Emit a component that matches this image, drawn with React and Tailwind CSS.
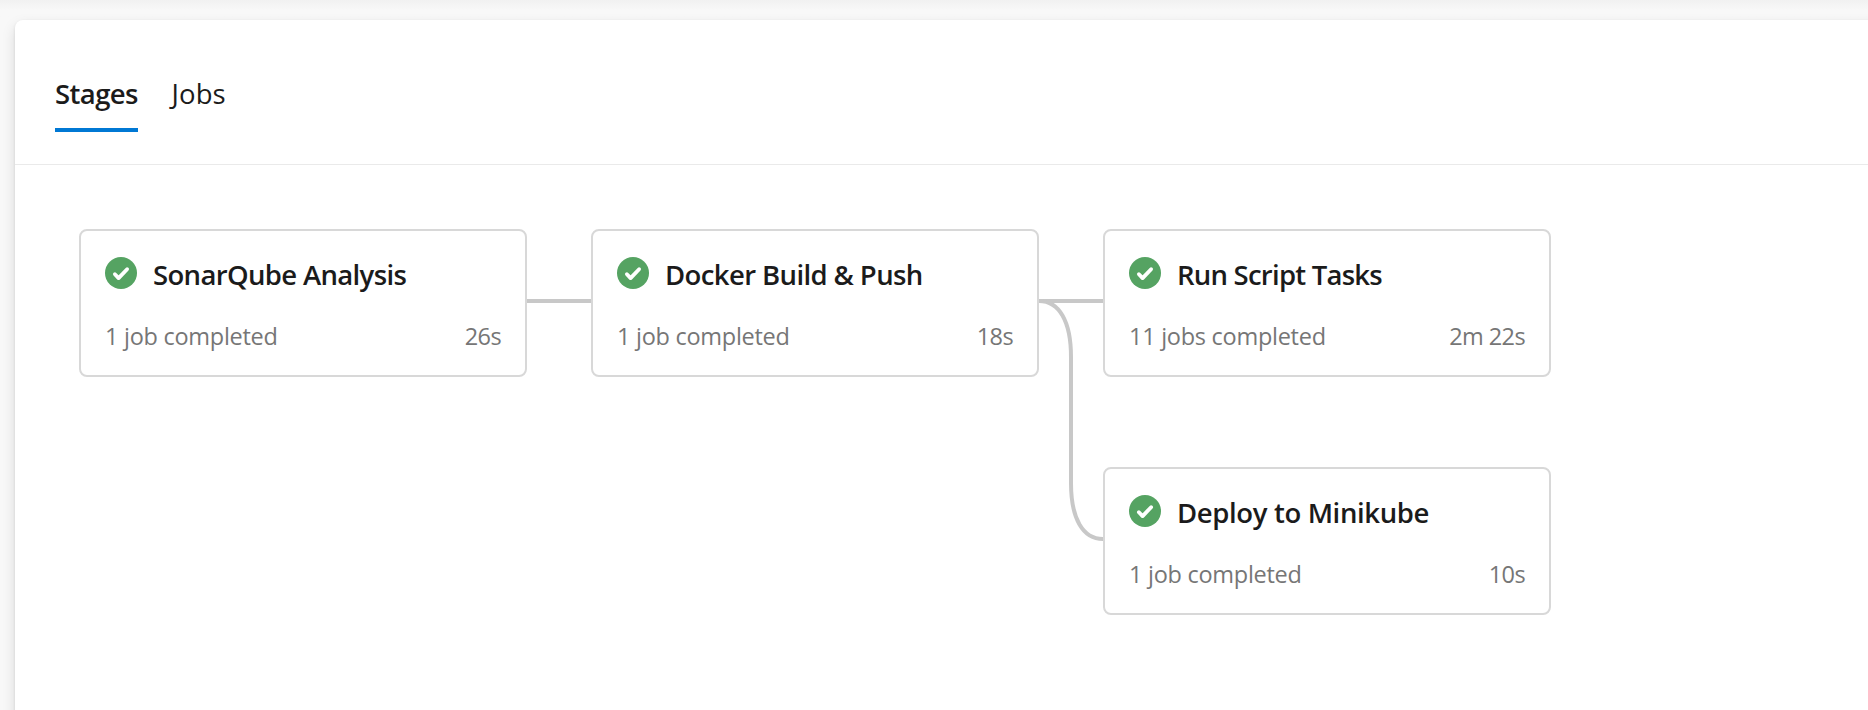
const stages = {
  sonar: { title: 'SonarQube Analysis', jobs: '1 job completed', time: '26s', tracking: 'tracking-[-0.65px]' },
  docker: { title: 'Docker Build & Push', jobs: '1 job completed', time: '18s', tracking: 'tracking-[-0.6px]' },
  script: { title: 'Run Script Tasks', jobs: '11 jobs completed', time: '2m 22s', tracking: 'tracking-[-0.76px]' },
  deploy: { title: 'Deploy to Minikube', jobs: '1 job completed', time: '10s', tracking: 'tracking-[-0.36px]' },
};

function CheckIcon() {
  return (
    <svg className="mt-[-4px] size-8 shrink-0" viewBox="0 0 32 32" fill="none">
      <circle cx="16" cy="16" r="16" fill="#55a362" />
      <path d="M9.9 17.2l3.7 3.9 8.5-8.9" stroke="#fff" strokeWidth="3.8" strokeLinecap="round" strokeLinejoin="round" />
    </svg>
  );
}

function StageCard({ stage }) {
  return (
    <div className="flex h-[148px] w-[448px] shrink-0 flex-col rounded-lg border-2 border-[#d8d8d8] bg-white px-6 pt-6">
      <div className="flex h-10 items-center gap-4">
        <CheckIcon />
        <h3 className={`text-[27.5px] leading-10 font-semibold whitespace-nowrap text-[#1b1b1b] ${stage.tracking}`}>
          {stage.title}
        </h3>
      </div>
      <div className="mt-[25px] flex h-8 justify-between text-[23.5px] leading-8 whitespace-nowrap text-[#767676]">
        <span className="tracking-[-0.27px]">{stage.jobs}</span>
        <span className="tracking-[-0.6px]">{stage.time}</span>
      </div>
    </div>
  );
}

function StraightLink() {
  return <div className="mt-[70px] h-1 w-16 shrink-0 bg-[#c8c8c8]" />;
}

function BranchLink() {
  return (
    <svg className="h-[386px] w-16 shrink-0" viewBox="0 0 64 386" fill="none" stroke="#c8c8c8" strokeWidth="4">
      <path d="M0 72H64" />
      <path d="M0 72C20 72 32 92 32 128V254C32 290 44 310 64 310" />
    </svg>
  );
}

export default function App() {
  return (
    <div className="flex h-[710px] w-full flex-col overflow-hidden bg-[#f8f8f8] font-['Open_Sans','Noto_Sans',sans-serif]">
      <div className="h-5 shrink-0 bg-linear-to-b from-[#f1f1f1] to-[#f8f8f8] to-50%" />
      <main className="ml-[15px] h-[720px] w-[1900px] shrink-0 rounded-lg bg-white shadow-[0_6px_14px_rgba(0,0,0,0.13),0_1px_3px_rgba(0,0,0,0.09)]">
        <nav className="flex h-[145px] gap-[33.5px] border-b border-[#eaeaea] pt-[52px] pl-10 text-[27.5px] leading-[44px] text-[#1b1b1b]">
          <div className="h-[60px] w-[83px] border-b-4 border-[#0078d4] font-semibold tracking-[-0.6px]">Stages</div>
          <div className="tracking-[0.1px]">Jobs</div>
        </nav>
        <section className="flex items-start pt-16 pl-16">
          <StageCard stage={stages.sonar} />
          <StraightLink />
          <StageCard stage={stages.docker} />
          <BranchLink />
          <div className="flex flex-col gap-[90px]">
            <StageCard stage={stages.script} />
            <StageCard stage={stages.deploy} />
          </div>
        </section>
      </main>
    </div>
  );
}
